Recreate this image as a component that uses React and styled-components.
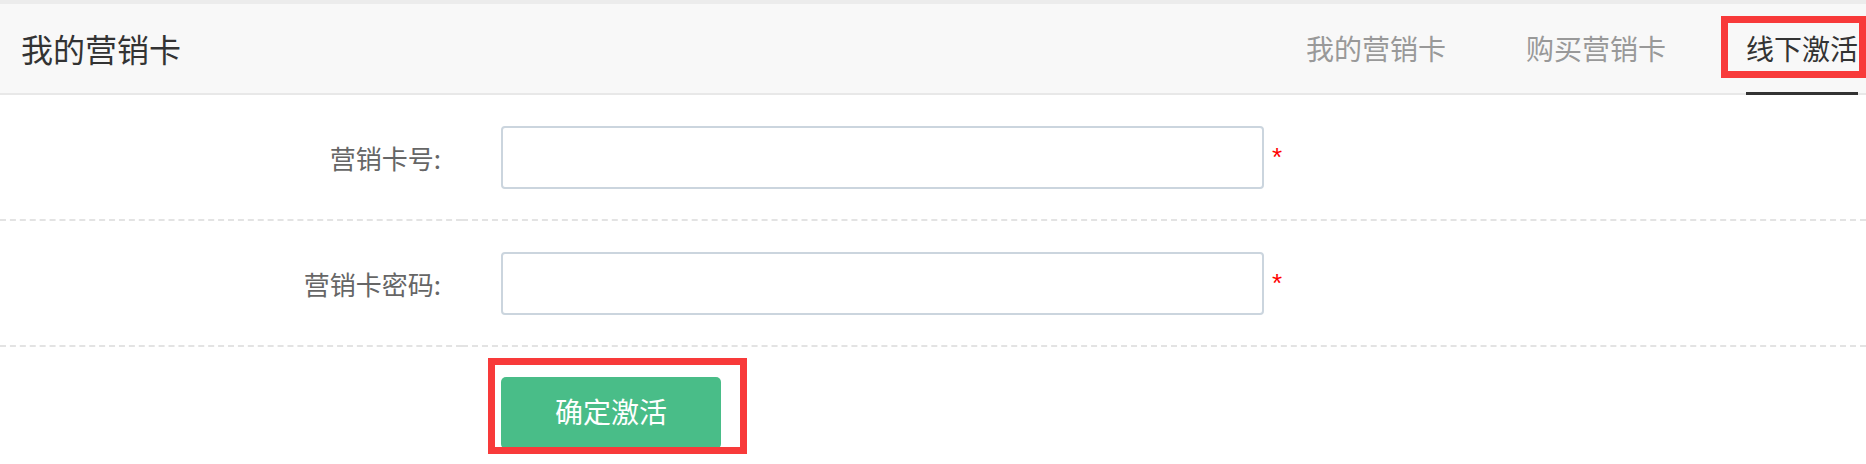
import React from "react";
import styled, { createGlobalStyle } from "styled-components";

const GlobalStyle = createGlobalStyle`
  html, body { margin: 0; padding: 0; background: #ffffff; }
  body {
    font-family: "Noto Sans CJK SC", "Liberation Sans", sans-serif;
    overflow: hidden;
  }
  * { box-sizing: border-box; }
`;

const Page = styled.div`
  width: 1866px;
  height: 464px;
  border-top: 4px solid #ececec;
  background: #ffffff;
`;

const Header = styled.header`
  position: relative;
  display: flex;
  align-items: stretch;
  height: 91px;
  padding: 0 8px 0 21px;
  background: #f8f8f8;
  border-bottom: 2px solid #e8e8e8;
`;

const Title = styled.h1`
  display: flex;
  align-items: center;
  margin: 0;
  font-size: 32px;
  font-weight: 400;
  color: #333333;
  padding-bottom: 2px;
`;

const Nav = styled.nav`
  display: flex;
  align-items: stretch;
  gap: 80px;
  margin-left: auto;
`;

const Tab = styled.a`
  position: relative;
  display: flex;
  align-items: center;
  font-size: 28px;
  line-height: 1;
  text-decoration: none;
  cursor: pointer;
  color: ${(p) => (p.$active ? "#333333" : "#999999")};
  border-bottom: 3px solid ${(p) => (p.$active ? "#333333" : "transparent")};
  margin-bottom: -2px;
  padding-bottom: 1px;
`;

const Highlight = styled.span`
  position: absolute;
  border: 7px solid #f83a3a;
  pointer-events: none;
  top: ${(p) => p.$top}px;
  left: ${(p) => p.$left}px;
  width: ${(p) => p.$width}px;
  height: ${(p) => p.$height}px;
`;

const Form = styled.form`
  display: flex;
  flex-direction: column;
  margin: 0;
`;

const Row = styled.div`
  display: flex;
  align-items: stretch;
  height: ${(p) => p.$height}px;
`;

const LabelCell = styled.label`
  display: flex;
  align-items: center;
  justify-content: flex-end;
  width: 462px;
  padding-right: 21px;
  font-size: 26px;
  color: #666666;
  border-bottom: ${(p) => (p.$lined ? "2px dashed #e3e3e3" : "none")};
`;

const FieldCell = styled.div`
  position: relative;
  display: flex;
  align-items: ${(p) => (p.$top ? "flex-start" : "center")};
  flex: 1;
  padding-left: 39px;
  padding-top: ${(p) => (p.$top ? 30 : 0)}px;
  border-bottom: ${(p) => (p.$lined ? "2px dashed #e3e3e3" : "none")};
`;

const Input = styled.input`
  width: 763px;
  height: 63px;
  border: 2px solid #cbd5de;
  border-radius: 4px;
  background: #ffffff;
  outline: none;
  padding: 0 12px;
  font-size: 24px;
  font-family: inherit;
`;

const Required = styled.span`
  margin-left: 8px;
  font-family: "Liberation Sans", sans-serif;
  font-size: 26px;
  color: #ff0000;
`;

const ButtonWrap = styled.div`
  position: relative;
`;

const SubmitButton = styled.button`
  display: flex;
  align-items: center;
  justify-content: center;
  width: 220px;
  height: 72px;
  border: none;
  border-radius: 5px;
  background: #49bd88;
  color: #ffffff;
  font-family: inherit;
  font-size: 28px;
  padding: 0 0 4px;
  cursor: pointer;
`;

const tabs = [
  { label: "我的营销卡" },
  { label: "购买营销卡" },
  { label: "线下激活", active: true },
];

const fields = [
  { label: "营销卡号:", type: "text" },
  { label: "营销卡密码:", type: "password" },
];

export default function App() {
  return (
    <>
      <GlobalStyle />
      <Page>
        <Header>
          <Title>我的营销卡</Title>
          <Nav>
            {tabs.map((t) => (
              <Tab key={t.label} $active={t.active}>
                {t.label}
              </Tab>
            ))}
          </Nav>
          <Highlight $top={12} $left={1721} $width={145} $height={62} />
        </Header>
        <Form onSubmit={(e) => e.preventDefault()}>
          {fields.map((f) => (
            <Row key={f.label} $height={126}>
              <LabelCell $lined>{f.label}</LabelCell>
              <FieldCell $lined>
                <Input type={f.type} />
                <Required>*</Required>
              </FieldCell>
            </Row>
          ))}
          <Row $height={117}>
            <LabelCell />
            <FieldCell $top>
              <ButtonWrap>
                <SubmitButton type="submit">确定激活</SubmitButton>
                <Highlight $top={-19} $left={-13} $width={259} $height={96} />
              </ButtonWrap>
            </FieldCell>
          </Row>
        </Form>
      </Page>
    </>
  );
}
